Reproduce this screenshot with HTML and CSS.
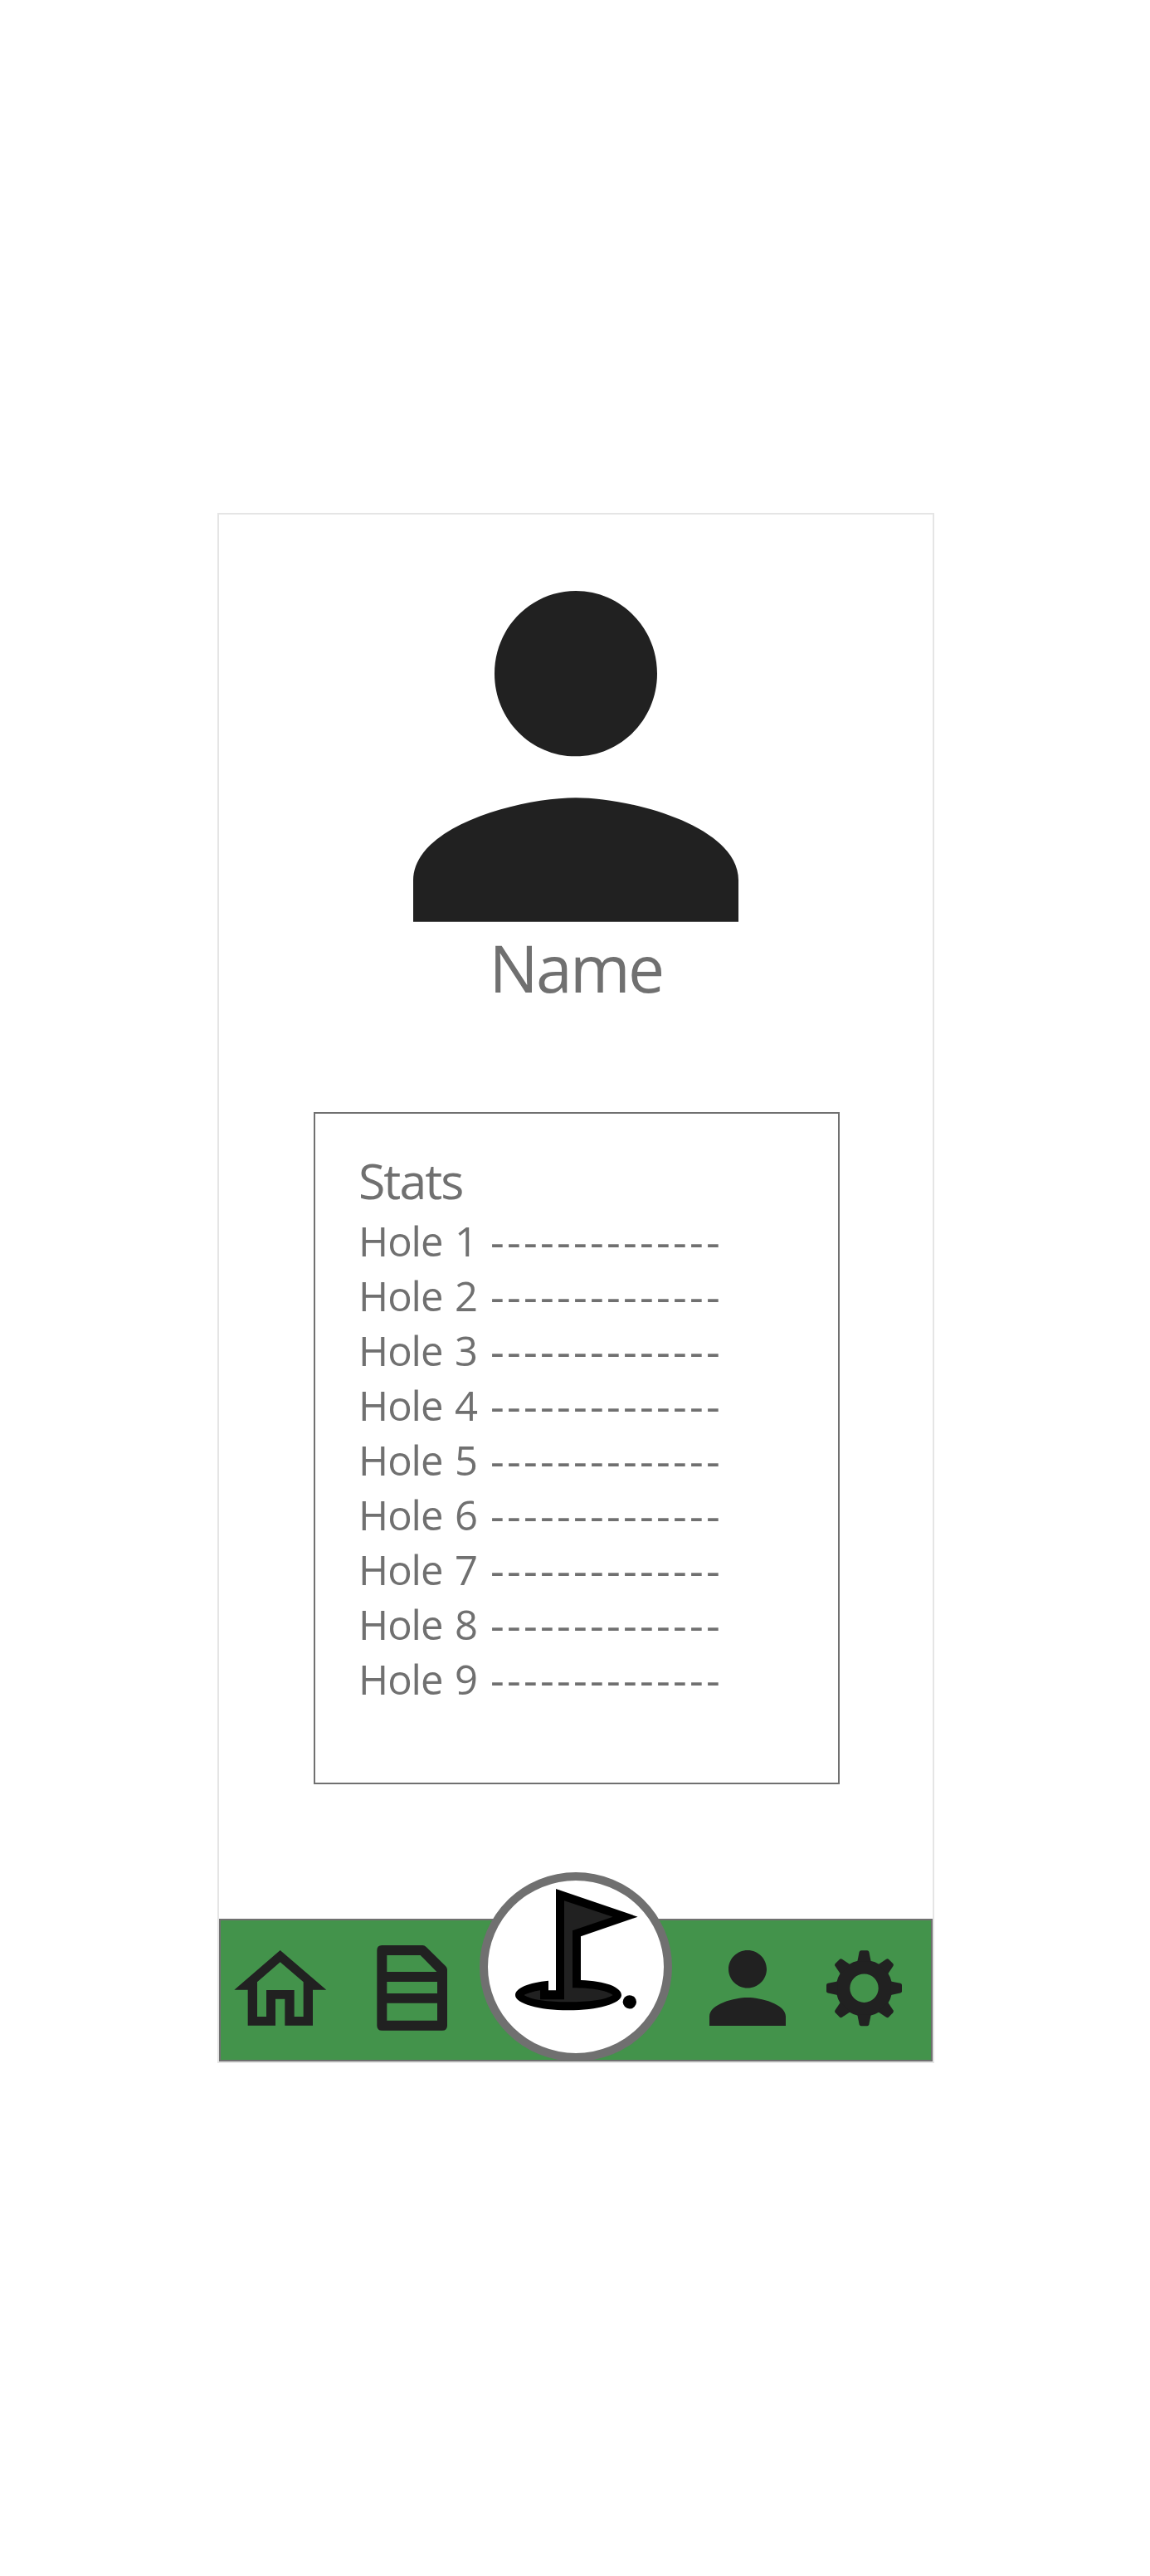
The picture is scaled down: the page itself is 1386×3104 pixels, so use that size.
FILE: index.html
```html
<!DOCTYPE html>
<html lang="en">
<head>
<meta charset="utf-8">
<title>Profile</title>
<link rel="stylesheet" href="styles.css">
</head>
<body>
<main class="screen">
  <section class="profile">
    <svg class="avatar" viewBox="4 4 16 16" preserveAspectRatio="none"><path d="M12 12c2.21 0 4-1.79 4-4s-1.79-4-4-4-4 1.79-4 4 1.79 4 4 4zm0 2c-2.67 0-8 1.34-8 4v2h16v-2c0-2.66-5.33-4-8-4z"/></svg>
    <h1 class="name">Name</h1>
  </section>
  <section class="stats">
    <h2 class="stats-title">Stats</h2>
    <ul class="holes">
      <li><span class="word">Hole</span><span class="num">1</span><span class="score">--------------</span></li>
      <li><span class="word">Hole</span><span class="num">2</span><span class="score">--------------</span></li>
      <li><span class="word">Hole</span><span class="num">3</span><span class="score">--------------</span></li>
      <li><span class="word">Hole</span><span class="num">4</span><span class="score">--------------</span></li>
      <li><span class="word">Hole</span><span class="num">5</span><span class="score">--------------</span></li>
      <li><span class="word">Hole</span><span class="num">6</span><span class="score">--------------</span></li>
      <li><span class="word">Hole</span><span class="num">7</span><span class="score">--------------</span></li>
      <li><span class="word">Hole</span><span class="num">8</span><span class="score">--------------</span></li>
      <li><span class="word">Hole</span><span class="num">9</span><span class="score">--------------</span></li>
    </ul>
  </section>
  <nav class="tabs">
    <svg class="icon home" viewBox="96 330 336 273"><path fill-rule="evenodd" d="M263 330 430 473H381V602H280V506H246V602H146V473H97ZM263 373 180 445V570H213V474H314V570H347V445Z"/></svg>
    <svg class="icon card" viewBox="612 312 255 309"><path fill-rule="evenodd" d="M631 312H778Q785 312 791 318L861 387Q867 393 867 400V602Q867 620 849 620H631Q613 620 613 602V330Q613 312 631 312ZM649 348V408H829L770 348ZM649 444V486H831V444ZM649 521V584H831V521Z"/></svg>
    <div class="play">
      <svg class="flag" viewBox="183 107 444 441">
        <path class="flag-edge" d="M330 107 626 208 420 279V437C510 440 567 463 567 491C567 522 480 546 375 546S183 522 183 491C183 466 232 445 303 439V474H330Z"/>
        <path d="M360 150 536 208 390 258V465C460 465 515 475 536 491C510 508 450 516 375 516S240 508 215 491C228 484 250 478 273 474V507H360Z"/>
        <circle class="flag-edge" cx="596.5" cy="516" r="24.5"/>
      </svg>
    </div>
    <svg class="icon person" viewBox="4 4 16 16" preserveAspectRatio="none"><path d="M12 12c2.21 0 4-1.79 4-4s-1.79-4-4-4-4 1.79-4 4 1.79 4 4 4zm0 2c-2.67 0-8 1.34-8 4v2h16v-2c0-2.66-5.33-4-8-4z"/></svg>
    <svg class="icon gear" viewBox="-45.5 -45.7 91 92">
      <defs><path id="tooth" d="M-8.2-32-5.9-43.6Q-5.4-45.5-3.6-45.5H3.6Q5.4-45.5 5.9-43.6L8.2-32Z"/></defs>
      <path fill-rule="evenodd" d="M0-34A34 34 0 1 1 0 34A34 34 0 1 1 0-34ZM0-17.2A17.2 17.2 0 1 0 0 17.2A17.2 17.2 0 1 0 0-17.2Z"/>
      <use href="#tooth"/><use href="#tooth" transform="rotate(45)"/><use href="#tooth" transform="rotate(90)"/><use href="#tooth" transform="rotate(135)"/><use href="#tooth" transform="rotate(180)"/><use href="#tooth" transform="rotate(225)"/><use href="#tooth" transform="rotate(270)"/><use href="#tooth" transform="rotate(315)"/>
    </svg>
  </nav>
</main>
</body>
</html>
```
FILE: styles.css
```css
* { box-sizing: border-box; }
body {
  margin: 0;
  min-height: 3104px;
  padding: 618px 0 0 262px;
  background: #fff;
  color: #707070;
  font-family: "Open Sans", "Noto Sans", sans-serif;
}
svg { display: block; flex: none; fill: #212121; }
h1, h2, ul { margin: 0; padding: 0; font-weight: 400; list-style: none; }
.screen {
  width: 864px;
  height: 1868px;
  border: 2px solid #e5e5e5;
  display: flex;
  flex-direction: column;
}
.profile {
  height: 720px;
  padding-top: 92px;
  display: flex;
  flex-direction: column;
  align-items: center;
}
.avatar { width: 392px; height: 398.7px; }
.name { font-size: 78.5px; line-height: 108px; letter-spacing: -2.6px; margin-top: 1px; }
.stats {
  width: 634px;
  height: 810px;
  margin-left: 114px;
  border: 2px solid #707070;
  padding: 40px 0 0 52px;
}
.stats-title { font-size: 59px; line-height: 80px; letter-spacing: -2px; }
.holes li {
  display: flex;
  height: 66px;
  font-size: 49px;
  line-height: 66px;
  white-space: nowrap;
}
.word { width: 116px; letter-spacing: -1px; }
.num { width: 43px; }
.score { font-size: 52px; letter-spacing: 3.27px; }
.tabs {
  height: 172px;
  margin-top: auto;
  border: 2px solid #707070;
  background: #43934b;
  display: flex;
  align-items: flex-start;
}
.icon { margin-top: 36px; }
.home { width: 112px; height: 91px; margin-left: 16px; }
.card { width: 85px; height: 103px; margin: 30px 0 0 60px; }
.play {
  flex: none;
  width: 232px;
  height: 228px;
  margin: -58px 0 0 39px;
  border: 10px solid #707070;
  border-radius: 50%;
  background: #fff;
  padding: 9.7px 0 0 33px;
}
.flag { width: 148px; height: 147px; }
.flag-edge { fill: #000; }
.person { width: 92px; height: 91px; margin-left: 45px; }
.gear { width: 91px; height: 92px; margin-left: 49px; }
```
